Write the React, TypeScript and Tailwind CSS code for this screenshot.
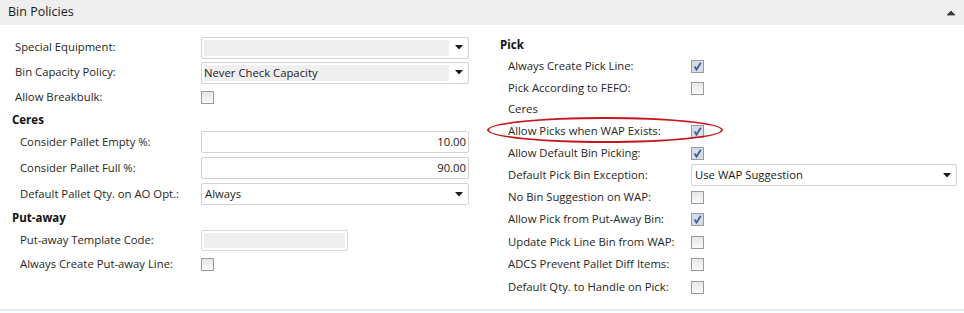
import React from "react";

const font = { fontFamily: '"Segoe UI", "Open Sans", "Noto Sans", sans-serif' };

function Arrow() {
  return (
    <svg width="8" height="5" viewBox="0 0 8 5" className="shrink-0">
      <path d="M0 0 H8 L4 4.5 Z" fill="#1a1a1a" />
    </svg>
  );
}

function Check({ checked }: { checked?: boolean }) {
  return (
    <div className="w-[13px] h-[13px] border border-[#9a9a9a] bg-gradient-to-b from-[#e6e6e6] to-[#fafafa] flex items-center justify-center shrink-0">
      {checked && (
        <svg width="11" height="11" viewBox="0 0 11 11">
          <rect x="0" y="0" width="11" height="11" fill="#d7dde6" />
          <path d="M2.5 5.5 L4.5 8.5 L8.8 1.8" stroke="#3e5f97" strokeWidth="1.8" fill="none" />
        </svg>
      )}
    </div>
  );
}

function Select({ value, grey = true, w }: { value?: string; grey?: boolean; w: string }) {
  return (
    <div className={`${w} h-[22px] border border-[#d2d2d2] rounded-[2px] bg-white flex items-center pl-[2px] pr-[5px]`}>
      <div className={`flex-1 h-[16px] flex items-center ${grey ? "bg-[#efefef] mr-[6px]" : "mr-[4px] pl-[1px]"} text-[11.3px] text-[#1a1a1a] leading-none`}>
        {value}
      </div>
      <Arrow />
    </div>
  );
}

function NumInput({ value }: { value: string }) {
  return (
    <div className="w-[268px] h-[22px] border border-[#d2d2d2] rounded-[2px] bg-white flex items-center justify-end pr-[2px] text-[11.3px] text-[#1a1a1a]">
      {value}
    </div>
  );
}

function LRow({ label, h, indent, children }: { label: string; h: string; indent: string; children?: React.ReactNode }) {
  return (
    <div className={`flex items-center ${h}`}>
      <div className={`${indent} w-[201px] text-[11.3px] text-[#262626] shrink-0`}>{label}</div>
      {children}
    </div>
  );
}

function RRow({ label, h, children }: { label: string; h: string; children?: React.ReactNode }) {
  return (
    <div className={`flex items-center ${h}`}>
      <div className="pl-[8px] w-[191px] text-[11.3px] text-[#262626] shrink-0">{label}</div>
      {children}
    </div>
  );
}

export default function App() {
  return (
    <div className="w-[964px] h-[313px] bg-white relative overflow-hidden" style={font}>
      <div className="h-[25px] bg-[#efefef] flex items-center justify-between pl-[8px] pr-[9px]">
        <span className="text-[12.5px] text-[#1a1a1a]">Bin Policies</span>
        <svg width="8" height="6" viewBox="0 0 8 6">
          <path d="M0 5 L4 1 L8 5 Z" fill="#3a3a3a" stroke="#3a3a3a" strokeWidth="0.8" />
        </svg>
      </div>
      <div className="flex h-[286px] border-b-2 border-[#e3edf5]">
        <div className="w-[488px] pt-[10px]">
          <LRow label="Special Equipment:" h="h-[25px]" indent="pl-[15px]">
            <Select w="w-[268px]" />
          </LRow>
          <LRow label="Bin Capacity Policy:" h="h-[25px]" indent="pl-[15px]">
            <Select w="w-[268px]" value="Never Check Capacity" />
          </LRow>
          <LRow label="Allow Breakbulk:" h="h-[25px]" indent="pl-[15px]">
            <Check />
          </LRow>
          <div className="h-[19px] flex items-center pl-[12px] text-[11.5px] font-bold text-[#111]">Ceres</div>
          <LRow label="Consider Pallet Empty %:" h="h-[26px]" indent="pl-[20px]">
            <NumInput value="10.00" />
          </LRow>
          <LRow label="Consider Pallet Full %:" h="h-[26px]" indent="pl-[20px]">
            <NumInput value="90.00" />
          </LRow>
          <LRow label="Default Pallet Qty. on AO Opt.:" h="h-[26px]" indent="pl-[20px]">
            <Select w="w-[268px]" value="Always" grey={false} />
          </LRow>
          <div className="h-[22px] flex items-center pl-[12px] text-[11.5px] font-bold text-[#111]">Put-away</div>
          <LRow label="Put-away Template Code:" h="h-[22px]" indent="pl-[20px]">
            <div className="w-[147px] h-[21px] border border-[#d8d8d8] rounded-[2px] bg-white p-[2px]">
              <div className="w-full h-full bg-[#efefef]" />
            </div>
          </LRow>
          <LRow label="Always Create Put-away Line:" h="h-[26px]" indent="pl-[20px]">
            <Check />
          </LRow>
        </div>
        <div className="flex-1 pt-[10px] pl-[12px] relative">
          <div className="h-[20px] flex items-center text-[11.5px] font-bold text-[#111]">Pick</div>
          <RRow label="Always Create Pick Line:" h="h-[22px]">
            <Check checked />
          </RRow>
          <RRow label="Pick According to FEFO:" h="h-[22px]">
            <Check />
          </RRow>
          <RRow label="Ceres" h="h-[21px]" />
          <RRow label="Allow Picks when WAP Exists:" h="h-[22px]">
            <Check checked />
          </RRow>
          <RRow label="Allow Default Bin Picking:" h="h-[22px]">
            <Check checked />
          </RRow>
          <RRow label="Default Pick Bin Exception:" h="h-[22px]">
            <Select w="w-[266px]" value="Use WAP Suggestion" grey={false} />
          </RRow>
          <RRow label="No Bin Suggestion on WAP:" h="h-[22.5px]">
            <Check />
          </RRow>
          <RRow label="Allow Pick from Put-Away Bin:" h="h-[22.5px]">
            <Check checked />
          </RRow>
          <RRow label="Update Pick Line Bin from WAP:" h="h-[22.5px]">
            <Check />
          </RRow>
          <RRow label="ADCS Prevent Pallet Diff Items:" h="h-[22.5px]">
            <Check />
          </RRow>
          <RRow label="Default Qty. to Handle on Pick:" h="h-[22.5px]">
            <Check />
          </RRow>
        </div>
      </div>
      <div className="absolute left-[487px] top-[117px] w-[236px] h-[26px] rounded-[50%] border-2 border-[#c4161c] pointer-events-none" />
    </div>
  );
}
